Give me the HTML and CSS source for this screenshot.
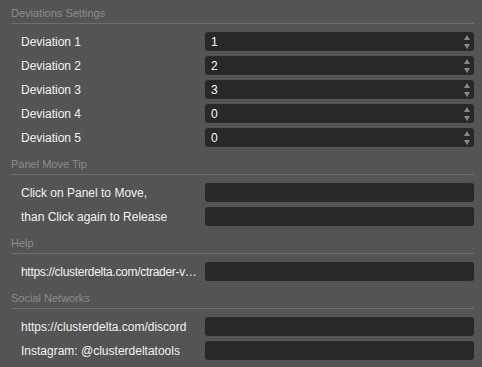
FILE: index.html
```html
<!DOCTYPE html>
<html lang="en">
<head>
  <meta charset="UTF-8">
  <title>Settings</title>
  <link rel="stylesheet" href="styles.css">
</head>
<body>
  <div class="panel">
    <div class="section">
      <div class="section-title">Deviations Settings</div>
      <div class="rows">
        <div class="row"><span class="label">Deviation 1</span><div class="field spin">1<span class="arrows"><i class="up"></i><i class="down"></i></span></div></div>
        <div class="row"><span class="label">Deviation 2</span><div class="field spin">2<span class="arrows"><i class="up"></i><i class="down"></i></span></div></div>
        <div class="row"><span class="label">Deviation 3</span><div class="field spin">3<span class="arrows"><i class="up"></i><i class="down"></i></span></div></div>
        <div class="row"><span class="label">Deviation 4</span><div class="field spin">0<span class="arrows"><i class="up"></i><i class="down"></i></span></div></div>
        <div class="row"><span class="label">Deviation 5</span><div class="field spin">0<span class="arrows"><i class="up"></i><i class="down"></i></span></div></div>
      </div>
    </div>

    <div class="section">
      <div class="section-title">Panel Move Tip</div>
      <div class="rows">
        <div class="row"><span class="label">Click on Panel to Move,</span><div class="field"></div></div>
        <div class="row"><span class="label">than Click again to Release</span><div class="field"></div></div>
      </div>
    </div>

    <div class="section">
      <div class="section-title">Help</div>
      <div class="rows">
        <div class="row"><span class="label label-tight">https://clusterdelta.com/ctrader-v…</span><div class="field"></div></div>
      </div>
    </div>

    <div class="section">
      <div class="section-title">Social Networks</div>
      <div class="rows">
        <div class="row"><span class="label">https://clusterdelta.com/discord</span><div class="field"></div></div>
        <div class="row"><span class="label">Instagram: @clusterdeltatools</span><div class="field"></div></div>
      </div>
    </div>
  </div>
</body>
</html>
```

FILE: styles.css
```css
body {
  margin: 0;
  background: #545454;
  font-family: "Liberation Sans", Arial, sans-serif;
  color: #f2f2f2;
}

.panel {
  padding: 0 8px 0 11px;
}

.section {
  margin-bottom: 4px;
}

.section-title {
  height: 23px;
  line-height: 26px;
  font-size: 11px;
  color: #8c8c8c;
  border-bottom: 1px solid #6e6e6e;
}

.rows {
  display: flex;
  flex-direction: column;
  gap: 5px;
  margin-top: 8px;
}

.row {
  display: grid;
  grid-template-columns: 194px 1fr;
  align-items: center;
  height: 19px;
}

.label {
  padding-left: 10px;
  font-size: 12px;
  white-space: nowrap;
}

.label-tight {
  letter-spacing: -0.3px;
}

.field {
  position: relative;
  height: 19px;
  line-height: 20px;
  background: #282828;
  border-radius: 3px;
  padding-left: 6px;
  font-size: 12px;
  color: #fff;
}

.arrows {
  position: absolute;
  right: 4px;
  top: 3px;
  display: flex;
  flex-direction: column;
  gap: 4px;
}

.arrows i {
  width: 0;
  height: 0;
  border-left: 3px solid transparent;
  border-right: 3px solid transparent;
}

.arrows .up {
  border-bottom: 5px solid #8a8a8a;
}

.arrows .down {
  border-top: 5px solid #8a8a8a;
}
```
